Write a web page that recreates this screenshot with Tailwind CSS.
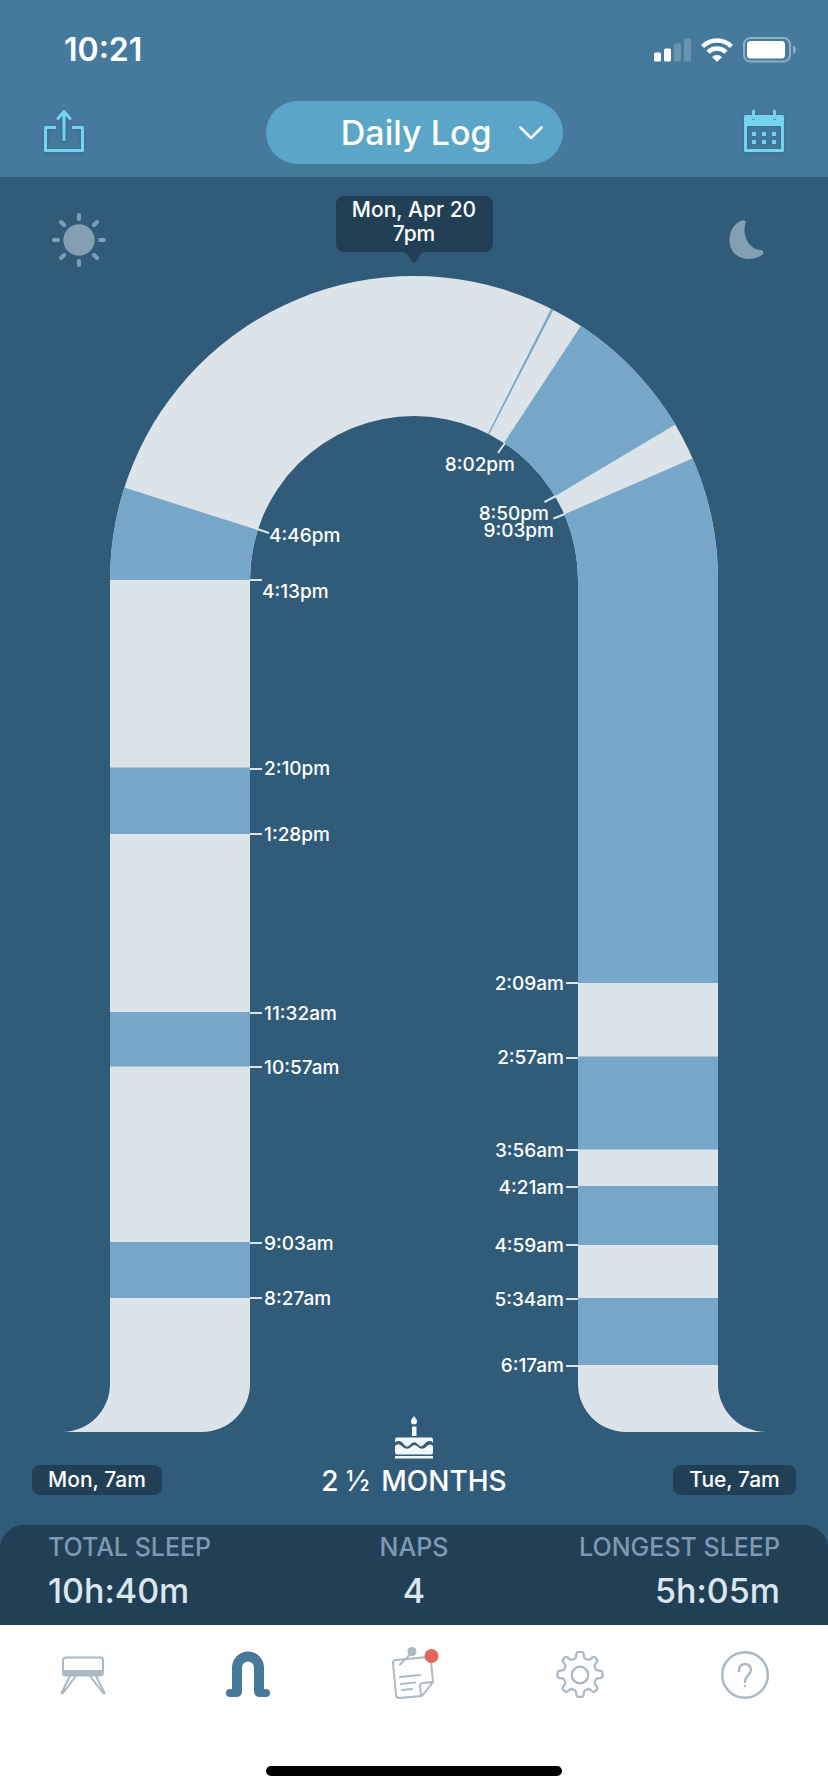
<!DOCTYPE html>
<html lang="en">
<head>
<meta charset="utf-8">
<meta name="viewport" content="width=device-width, initial-scale=1">
<title>Daily Log</title>
<script src="https://cdn.jsdelivr.net/npm/@tailwindcss/browser@4"></script>
</head>
<body class="min-h-screen flex flex-col bg-[#fefefe] font-['Inter','Noto_Sans',sans-serif] text-white font-medium">
<header class="bg-[#457a9d] pb-[13px]">
  <div class="flex items-center justify-between pl-16 pr-8 pt-[30px]">
    <time class="text-[32px] leading-10 font-semibold">10:21</time>
    <div class="flex items-center gap-2.5">
      <svg class="w-[37px] h-6" viewBox="0 0 37 24" fill="#fff" aria-label="Signal"><rect y="14.500" width="7" height="9" rx="1.500"/><rect x="10" y="10.500" width="7" height="13" rx="1.500"/><g opacity=".2"><rect x="20" y="5.500" width="7" height="18" rx="1.500"/><rect x="30" y=".5" width="7" height="23" rx="1.500"/></g></svg>
      <svg class="w-8 h-6" viewBox="0 0 32 24" aria-label="Wi-Fi"><g fill="none" stroke="#fff" stroke-width="4.500"><path d="M1.600 8.500a20.500 20.500 0 0 1 28.800 0"/><path d="M7 14.200a12.800 12.800 0 0 1 18 0"/></g><path d="M16 24l-5-5a7.200 7.200 0 0 1 10 0z" fill="#fff"/></svg>
      <svg class="w-[53px] h-[26px]" viewBox="0 0 53 26" aria-label="Battery"><rect x="1" y="1" width="46" height="23.500" rx="6.500" fill="none" stroke="#fff" stroke-opacity=".4" stroke-width="2"/><rect x="4" y="4" width="38" height="17.500" rx="3.500" fill="#fff"/><path d="M50 8.500c4 1.500 4 7 0 8.500z" fill="#fff" opacity=".4"/></svg>
    </div>
  </div>
  <div class="flex items-center justify-between px-11 pt-[31px]">
    <button type="button" aria-label="Share" class="mb-1 drop-shadow-sm">
      <svg class="w-10 h-11" viewBox="0 0 40 44" fill="none" stroke="#74d4f0" stroke-width="3" stroke-linejoin="round"><path d="M12 18.500H1.500v23h37v-23H28"/><path d="M20 30.500V3M14 9.500l6-7 6 7" stroke-linecap="round"/></svg>
    </button>
    <button type="button" class="flex h-[63px] w-[297px] items-center justify-end gap-[27px] rounded-full bg-[#5ba6c8] pr-5 text-[34px] leading-10">
      Daily Log
      <svg class="w-6 h-4" viewBox="0 0 24 16" fill="none" stroke="#fff" stroke-width="2.500" stroke-linecap="round" stroke-linejoin="round"><path d="M1.500 2.500L12 13 22.500 2.500"/></svg>
    </button>
    <button type="button" aria-label="Calendar" class="mb-1 drop-shadow-sm">
      <svg class="w-10 h-11" viewBox="0 0 40 44"><path d="M1.500 7.500h37v34h-37z" fill="none" stroke="#74d4f0" stroke-width="3" stroke-linejoin="round"/><path d="M1 7h38v10H1z" fill="#74d4f0"/><path d="M9.500 7v4M30.500 7v4" stroke="#457a9d" stroke-width="3"/><path d="M9.500 2v7M30.500 2v7" stroke="#74d4f0" stroke-width="3" stroke-linecap="round"/><path d="M8 23h4v4H8zm10 0h4v4h-4zm10 0h4v4h-4zM8 31h4v4H8zm10 0h4v4h-4zm10 0h4v4h-4z" fill="#74d4f0"/></svg>
    </button>
  </div>
</header>

<main class="bg-[#305c7a]">
  <div class="flex h-[99px] items-start justify-between px-[51px] pt-[19px]">
    <svg class="mt-4 w-14 h-14" viewBox="-28 -28 56 56" aria-label="Day"><circle r="15.700" fill="#839fb4"/><path d="M0-25v4M0 21v4M-25 0h4M21 0h4M-18-18l3 3M15 15l3 3M-18 18l3-3M15-15l3-3" stroke="#839fb4" stroke-width="4" stroke-linecap="round"/></svg>
    <div class="flex flex-col items-center">
      <p class="h-14 w-[157px] rounded-lg bg-[#224055] pt-0.5 text-center text-[21px] leading-6">Mon, Apr 20<br>7pm</p>
      <svg class="w-6 h-3" viewBox="0 0 24 12"><path d="M0 0h24c-3 0-4 1-5 2l-6 8.500q-1 1.500-2 0L5 2C4 1 3 0 0 0" fill="#224055"/></svg>
    </div>
    <svg class="mt-4 w-14 h-14" viewBox="0 0 56 56" aria-label="Night"><path d="M21 8.500c2.500-.8 4.500.8 3.500 3-4 11 3.500 26 15 26.500 3 0 4 2.500 2 4.500C31 51 9 48 8.500 28.500 8.500 18.500 13 11.500 21 8.500z" fill="#839fb4"/></svg>
  </div>

  <svg class="block w-full" viewBox="0 276 828 1156" role="img" aria-label="Sleep and wake periods for the day">
    <defs>
      <clipPath id="track"><path d="M110 580a304 304 0 0 1 608 0V1384a48 48 0 0 0 48 48H626a48 48 0 0 1-48-48V580a164 164 0 0 0-328 0V1384a48 48 0 0 1-48 48H62a48 48 0 0 0 48-48z"/></clipPath>
    </defs>
    <g clip-path="url(#track)">
      <path d="M0 276h828v1156H0z" fill="#dce3e9"/>
      <g fill="#77a7c8">
        <path d="M414 580L104 481V580z"/>
        <path d="M110 767.500h140v66.500H110zM110 1012h140v54.500H110zM110 1242h140v56H110z"/>
        <path d="M414 580L552 307l2.200 1.200z"/>
        <path d="M414 580L588 315 690 316 688 417z"/>
        <path d="M414 580L706 452.500 730 580V983H578V580z"/>
        <path d="M578 1056.500h140v93H578zM578 1186h140v59H578zM578 1298h140v67H578z"/>
      </g>
    </g>
    <g stroke="#dce3e9" stroke-width="2">
      <path d="M257 529l12 4M250 580h12M250 769h12M250 834h12M250 1013h12M250 1067h12M250 1243h12M250 1298h12"/>
      <path d="M505 443l-7 10M556 496l-11.500 6M565 514l-11.500 4.500M578 983h-12M578 1058h-12M578 1150h-12M578 1187h-12M578 1245h-12M578 1299h-12M578 1366h-12"/>
    </g>
    <g fill="#fff" font-size="19">
      <text x="269" y="542">4:46pm</text>
      <text x="262" y="598">4:13pm</text>
      <text x="264" y="775">2:10pm</text>
      <text x="264" y="841">1:28pm</text>
      <text x="264" y="1020">11:32am</text>
      <text x="264" y="1074">10:57am</text>
      <text x="264" y="1250">9:03am</text>
      <text x="264" y="1305">8:27am</text>
      <g text-anchor="end">
        <text x="515" y="471">8:02pm</text>
        <text x="549" y="520">8:50pm</text>
        <text x="554" y="537">9:03pm</text>
        <text x="564" y="990">2:09am</text>
        <text x="564" y="1064">2:57am</text>
        <text x="564" y="1157">3:56am</text>
        <text x="564" y="1194">4:21am</text>
        <text x="564" y="1252">4:59am</text>
        <text x="564" y="1306">5:34am</text>
        <text x="564" y="1372">6:17am</text>
      </g>
    </g>
  </svg>

  <div class="-mt-4 grid grid-cols-[1fr_auto_1fr] items-end px-8 pb-7">
    <p class="mb-0.5 w-[130px] rounded-lg bg-[#224055] text-center text-[21px] leading-[30px]">Mon, 7am</p>
    <div class="flex flex-col items-center gap-1.5">
      <svg class="w-10 h-[43px]" viewBox="0 0 40 43" fill="#f3f7f9"><path d="M20 0c1 2 3 3 3 5.500a3 3 0 0 1-6 0C17 3 19 2 20 0z"/><rect x="18" y="10.500" width="4.500" height="9.500" rx=".5"/><path d="M3 21.500h34q2 0 2 2v3c-4-3-6-1-9 2s-4 2-6.500-.5-4.500-2-7 .5-4 3-6.500 0-5-5-9-2v-3q0-2 2-2z"/><path d="M1 30c3-3 5-2 7.500.5 3 3 6 3 9 0 2-2 4-2 6 0 3 3 6 3 9 0 2-2 3.500-3 6.500-.5v6.500q0 2-2 2H3q-2 0-2-2z"/><rect x="1" y="40" width="38" height="2.500"/></svg>
      <p class="text-[28px] leading-8">2 <span class="mr-1 font-normal">½</span> MONTHS</p>
    </div>
    <p class="mb-0.5 w-[123px] justify-self-end rounded-lg bg-[#224055] text-center text-[21px] leading-[30px]">Tue, 7am</p>
  </div>

  <dl class="grid h-[100px] grid-cols-3 rounded-t-3xl bg-[#224055] px-12 pt-1.5">
    <div><dt class="whitespace-nowrap text-[25px] leading-8 text-[#7c9ab1]">TOTAL SLEEP</dt><dd class="pt-2 text-[34px] leading-10 text-[#dce6ef]">10h:40m</dd></div>
    <div class="text-center"><dt class="text-[25px] leading-8 text-[#7c9ab1]">NAPS</dt><dd class="pt-2 text-[34px] leading-10 text-[#dce6ef]">4</dd></div>
    <div class="text-right"><dt class="whitespace-nowrap text-[25px] leading-8 text-[#7c9ab1]">LONGEST SLEEP</dt><dd class="pt-2 text-[34px] leading-10 text-[#dce6ef]">5h:05m</dd></div>
  </dl>
</main>

<footer class="flex grow flex-col items-center justify-between pb-4">
  <nav class="grid w-full grid-cols-5 justify-items-center pt-5" aria-label="Main">
    <a href="#crib" aria-label="Crib"><svg class="w-14 h-14" viewBox="0 0 56 56" fill="none" stroke="#aab9c3" stroke-width="2"><rect x="8" y="12.500" width="40" height="18" rx="3"/><path d="M8 25h40v3q0 3-3 3H11q-3 0-3-3z" fill="#aab9c3" stroke="none"/><path d="M15 31L7 47q-1 2 1 1L21 31M41 31l8 16q1 2-1 1L35 31" stroke-linejoin="round"/></svg></a>
    <a href="#log" aria-label="Daily log" aria-current="page"><svg class="w-14 h-14" viewBox="0 0 56 56"><path d="M12 22.500a16 16 0 0 1 32 0V44h2a4 4 0 0 1 0 8H40q-6 0-6-6V22.500a6 6 0 0 0-12 0V46q0 6-6 6H10a4 4 0 0 1 0-8h2z" fill="#457a9d"/></svg></a>
    <a href="#notes" aria-label="Notes, new items"><svg class="w-14 h-14" viewBox="0 0 56 56" fill="none" stroke="#aab9c3" stroke-width="2" stroke-linecap="round" stroke-linejoin="round"><path d="M45 16l2 21-11 14-23 2q-3 0-3-3L7 18q0-3 3-3l32-3"/><path d="M47 37l-10 1q-3 0-3 3l1 10M14 32l20-2M15 39l14-1.500M16 45l10-1M14 19.500l10-10"/><circle cx="26" cy="6.500" r="4.500" fill="#aab9c3" stroke="none"/><circle cx="45.500" cy="11" r="7" fill="#e0665f" stroke="none"/></svg></a>
    <a href="#settings" aria-label="Settings"><svg class="w-14 h-14" viewBox="-28 -30 56 56" fill="none" stroke="#aab9c3" stroke-width="2.200" stroke-linejoin="round"><circle r="8.300"/><path d="M-3.500-21.500q.3-1.500 1.500-1.500h4q1.200 0 1.500 1.500l.7 4q.3 1 1.300 1.300l2 .8q1 .5 2 0l3.500-2.400q1-.7 2 .2l2 2q1 1 .2 2l-2.400 3.500q-.5 1 0 2l.8 2q.3 1 1.300 1.300l4 .7q1.500.3 1.500 1.500v4q0 1.200-1.500 1.500l-4 .7q-1 .3-1.300 1.300l-.8 2q-.5 1 0 2l2.400 3.500q.7 1-.2 2l-2 2q-1 1-2 .2l-3.500-2.400q-1-.5-2 0l-2 .8q-1 .3-1.300 1.300l-.7 4q-.3 1.500-1.500 1.500h-4q-1.200 0-1.500-1.500l-.7-4q-.3-1-1.300-1.300l-2-.8q-1-.5-2 0l-3.500 2.400q-1 .7-2-.2l-2-2q-1-1-.2-2l2.400-3.500q.5-1 0-2l-.8-2q-.3-1-1.300-1.300l-4-.7q-1.500-.3-1.500-1.500v-4q0-1.200 1.500-1.500l4-.7q1-.3 1.300-1.300l.8-2q.5-1 0-2l-2.400-3.500q-.7-1 .2-2l2-2q1-1 2-.2l3.500 2.400q1 .5 2 0l2-.8q1-.3 1.300-1.300z"/></svg></a>
    <a href="#help" aria-label="Help"><svg class="w-14 h-14" viewBox="-28 -30 56 56" fill="none" stroke="#aab9c3" stroke-width="2.500"><circle r="22.800"/><path d="M-6-4v-1a6 6 0 0 1 12 0c0 5-6 5-6 12" stroke-linecap="round"/><circle cy="11" r="1.200" fill="#aab9c3" stroke="none"/></svg></a>
  </nav>
  <div class="h-2.5 w-[296px] rounded-full bg-black"></div>
</footer>
</body>
</html>
